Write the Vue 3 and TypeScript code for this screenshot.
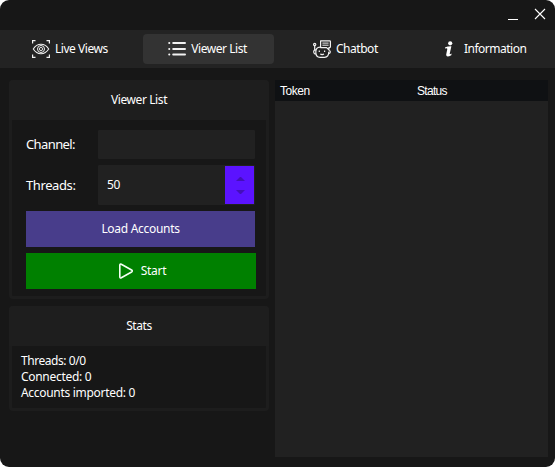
<script setup lang="ts">
import { ref } from 'vue'

type TabId = 'live' | 'list' | 'chat' | 'info'
const tabs: { id: TabId; label: string }[] = [
  { id: 'live', label: 'Live Views' },
  { id: 'list', label: 'Viewer List' },
  { id: 'chat', label: 'Chatbot' },
  { id: 'info', label: 'Information' },
]
const active = ref<TabId>('list')
const channel = ref('')
const threads = ref(50)
const stats = ref({ running: 0, total: 0, connected: 0, imported: 0 })
const step = (n: number) => {
  threads.value = Math.max(0, threads.value + n)
}
</script>

<template>
  <div class="window">
    <header class="titlebar">
      <button class="win-btn" aria-label="Minimize">
        <svg width="12" height="12" viewBox="0 0 12 12"><path d="M1 7h10v1H1z" fill="#fff" /></svg>
      </button>
      <button class="win-btn" aria-label="Close">
        <svg width="12" height="12" viewBox="0 0 12 12"><path d="M1 1l10 10M11 1L1 11" stroke="#fff" stroke-width="1.1" /></svg>
      </button>
    </header>

    <nav class="tabs">
      <button
        v-for="t in tabs"
        :key="t.id"
        class="tab"
        :class="[t.id, { active: active === t.id }]"
        @click="active = t.id"
      >
        <svg class="icon" width="18" height="18" viewBox="0 0 18 18" fill="none" stroke="#f2f2f2">
          <g v-if="t.id === 'live'">
            <path d="M.6 3.5V.6h2.9M14.5.6h2.9v2.9M17.4 14.5v2.9h-2.9M3.5 17.4H.6v-2.9" stroke-width="1.2" />
            <path d="M1.3 9C3.2 6 6 4.3 9 4.3S14.8 6 16.7 9C14.8 12 12 13.7 9 13.7S3.2 12 1.3 9z" stroke-width="1.1" />
            <circle cx="9" cy="9" r="3.5" stroke-width="1" />
            <circle cx="9" cy="9" r="1.6" stroke-width=".9" />
          </g>
          <g v-else-if="t.id === 'list'" stroke-width="2" stroke-linecap="round">
            <path d="M5.2 3H17M5.2 9H17M5.2 14.5H17" />
            <path d="M1.2 3h.1M1.2 9h.1M1.2 14.5h.1" />
          </g>
          <g v-else-if="t.id === 'chat'" stroke-width="1.2" stroke-linejoin="round">
            <path d="M7.6.8h9.1q.7 0 .7.7v5.3q0 .8-.7.8h-.8v2.1L13.6 7.6h-6z" />
            <path d="M9.4 3.1h6.2M9.4 5.2h6.2" stroke-width="1" />
            <circle cx="1.7" cy="4.5" r="1.1" />
            <path d="M1.7 5.7v4.8M7 7.2C4 7.3 2.8 8.9 2.8 12s1.6 5.3 4.2 5.3h4.5c2.8 0 4.3-2.2 4.3-5.5" />
            <path d="M2.8 10H1.7Q.7 10.3.7 11.8t1 2h1.2M15.8 10.6q1.5-.1 1.5 1.4t-1.8 1.7" />
            <path d="M6.3 10.6v1.4M11.6 10.6v1.4M7.3 14q1.8 1.1 3.7 0" />
          </g>
          <g v-else fill="#fff" stroke="none">
            <circle cx="10.2" cy="3.3" r="2.1" />
            <path d="M5.2 7.2Q8 6.2 11.4 6.3L9.7 13.7Q9.5 14.7 11.6 13.6L11.3 15.2Q5.9 18.3 6.2 14.4L7.3 9Q7.2 7.7 5 8.5z" />
          </g>
        </svg>
        <span>{{ t.label }}</span>
      </button>
    </nav>

    <main class="content">
      <div class="left">
        <section class="group viewer">
          <h2>Viewer List</h2>
          <div class="form">
            <label class="row">
              <span class="caption channel">Channel:</span>
              <input v-model="channel" class="field" type="text" />
            </label>
            <div class="row threads">
              <span class="caption">Threads:</span>
              <div class="spin">
                <span class="value">{{ threads }}</span>
                <div class="steps">
                  <button aria-label="Increase" @click="step(1)">
                    <svg width="9" height="4" viewBox="0 0 9 4"><path d="M0 4L4 0h1l4 4z" fill="#430fb9" /></svg>
                  </button>
                  <button aria-label="Decrease" @click="step(-1)">
                    <svg width="9" height="4" viewBox="0 0 9 4"><path d="M0 0l4 4h1l4-4z" fill="#430fb9" /></svg>
                  </button>
                </div>
              </div>
            </div>
            <button class="action load">Load Accounts</button>
            <button class="action start">
              <svg width="16" height="16" viewBox="0 0 16 16" fill="none" stroke="#f4fff4" stroke-width="1.6" stroke-linejoin="round">
                <path d="M1.8 2.2Q1.8.6 3.3 1.3L13.6 7q1.4 1 0 2L3.3 14.7q-1.5.7-1.5-.9z" />
              </svg>
              <span>Start</span>
            </button>
          </div>
        </section>

        <section class="group stats">
          <h2>Stats</h2>
          <div class="lines">
            <p>Threads: {{ stats.running }}/{{ stats.total }}</p>
            <p>Connected: {{ stats.connected }}</p>
            <p>Accounts imported: {{ stats.imported }}</p>
          </div>
        </section>
      </div>

      <section class="table">
        <div class="thead"><span>Token</span><span>Status</span></div>
      </section>
    </main>
  </div>
</template>

<style>
body {
  background: #fff;
}
</style>

<style scoped>
* {
  box-sizing: border-box;
}
.window {
  display: flex;
  flex-direction: column;
  width: 555px;
  height: 467px;
  overflow: hidden;
  border-radius: 9px;
  background: #171717;
  color: #fff;
  font: 12px/16px "Noto Sans", "Open Sans", sans-serif;
  letter-spacing: -0.3px;
}
button {
  border: 0;
  padding: 0;
  margin: 0;
  background: none;
  color: inherit;
  font: inherit;
  letter-spacing: inherit;
}
svg {
  display: block;
  flex: none;
}
.titlebar {
  display: flex;
  justify-content: flex-end;
  align-items: center;
  gap: 15px;
  height: 30px;
  padding: 0 9px 2px 0;
}
.win-btn:first-child {
  padding-top: 8px;
}
.tabs {
  display: flex;
  gap: 7px;
  height: 38px;
  padding: 4px 5px;
  background: #232323;
  letter-spacing: -0.45px;
}
.tab {
  display: flex;
  flex: 1;
  align-items: center;
  justify-content: center;
  gap: 5px;
  padding-right: 1px;
  border-radius: 4px;
}
.tab.info {
  gap: 6px;
  padding-right: 2px;
  letter-spacing: -0.5px;
}
.tab.active {
  background: #333;
}
.content {
  display: flex;
  gap: 6px;
  padding: 12px 7px 10px 9px;
  flex: 1;
}
.left {
  display: flex;
  flex-direction: column;
  gap: 7px;
  width: 260px;
}
.group {
  border: 3px solid #1d1d1d;
  border-top: 0;
  border-radius: 4px;
  background: #171717;
}
.viewer {
  height: 219px;
}
.stats {
  height: 105px;
}
h2 {
  height: 40px;
  margin: 0 -3px;
  border-radius: 4px 4px 0 0;
  background: #1e1e1e;
  font-size: 12px;
  font-weight: 400;
  line-height: 40px;
  letter-spacing: -0.4px;
  text-align: center;
}
.form {
  display: flex;
  flex-direction: column;
  gap: 6px;
  padding: 10px 10px 0 14px;
}
.row {
  display: flex;
  align-items: center;
  height: 29px;
}
.threads {
  height: 40px;
}
.caption {
  width: 72px;
  font-size: 13px;
  letter-spacing: -0.4px;
}
.channel {
  padding-bottom: 2px;
  letter-spacing: -0.6px;
}
.field,
.spin {
  width: 157px;
  height: 100%;
  border: 0;
  border-radius: 1px;
  outline: 0;
  background: #212121;
  color: #fff;
}
.spin {
  display: flex;
  justify-content: space-between;
  align-items: center;
  padding: 1px 1px 1px 9px;
}
.steps {
  display: flex;
  flex-direction: column;
  align-items: center;
  justify-content: center;
  gap: 9px;
  width: 29px;
  height: 38px;
  padding: 1px 0 0 1px;
  background: #5b13ff;
}
.action {
  display: flex;
  align-items: center;
  justify-content: center;
  width: 229px;
  height: 36px;
}
.load {
  background: #483d8b;
}
.start {
  gap: 7px;
  width: 230px;
  padding-left: 2px;
  background: #008000;
}
.lines {
  padding: 7px 9px;
}
p {
  margin: 0;
}
p:first-child {
  letter-spacing: -0.45px;
}
.table {
  flex: 1;
  background: #212121;
}
.thead {
  display: grid;
  grid-template-columns: 137px 1fr;
  height: 21px;
  padding-left: 5px;
  background: #0f1113;
  font-family: "Liberation Sans", Arial, sans-serif;
  line-height: 22px;
  letter-spacing: -0.45px;
}
.thead span:last-child {
  letter-spacing: -0.7px;
}
</style>
